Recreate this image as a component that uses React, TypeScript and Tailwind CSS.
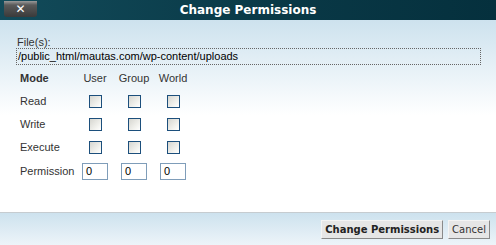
import { Fragment } from "react";

const rows = ["Read", "Write", "Execute"];
const cols = ["User", "Group", "World"];

function Box() {
  return (
    <div className="h-[13px] w-[13px] border border-[#1c4f7c] bg-[linear-gradient(135deg,#d6d6d0_0%,#f4f4f0_70%,#ffffff_100%)]" />
  );
}

function PermInput() {
  return (
    <div className="flex h-[17px] w-[27px] items-center border border-[#7f9db9] bg-white pl-[3px] text-[11px] leading-none text-black">
      0
    </div>
  );
}

export default function App() {
  return (
    <div className="flex h-[245px] w-[496px] flex-col overflow-hidden bg-white font-['Liberation_Sans',Arial,sans-serif] text-[11px]">
      {/* Title bar */}
      <div className="relative flex h-[20px] items-center justify-center bg-[linear-gradient(to_right,#124b5a,#0a3a48_50%,#05303d)]">
        <div className="absolute left-[4px] top-[1px] flex h-[16px] w-[33px] items-center justify-center rounded-b-[3px] bg-[linear-gradient(to_bottom,#9a9a9a_0%,#5a5a5a_25%,#3a3a3a_100%)]">
          <span className="font-['DejaVu_Sans',sans-serif] text-[12px] font-bold leading-none text-white">✕</span>
        </div>
        <span className="font-['DejaVu_Sans',sans-serif] text-[12px] font-bold text-white">Change Permissions</span>
      </div>

      {/* Body */}
      <div className="flex-1 bg-[linear-gradient(to_bottom,#cde2ee_0px,#ffffff_95px)] pl-[16px] pr-[15px] pt-[16px]">
        <div className="pl-[1px] leading-[13px] text-[#333]">File(s):</div>
        <div className="mt-[-1px] flex h-[17px] items-center border border-dotted border-[#666] pl-[1px] text-black">
          /public_html/mautas.com/wp-content/uploads
        </div>

        <div className="mt-[2px] grid grid-cols-[49px_26px_26px_26px] gap-x-[13px] pl-[4px] text-[#333]">
          <div className="flex h-[23px] items-center font-bold">Mode</div>
          {cols.map((c) => (
            <div key={c} className="flex h-[23px] items-center justify-center">
              {c}
            </div>
          ))}

          {rows.map((r) => (
            <Fragment key={r}>
              <div className="flex h-[23px] items-center">{r}</div>
              {cols.map((c) => (
                <div key={r + c} className="flex h-[23px] items-center justify-center">
                  <Box />
                </div>
              ))}
            </Fragment>
          ))}

          <div className="flex h-[24px] items-center">Permission</div>
          {cols.map((c) => (
            <div key={"p" + c} className="flex h-[24px] items-center justify-center">
              <PermInput />
            </div>
          ))}
        </div>
      </div>

      {/* Footer */}
      <div className="flex h-[33px] items-start justify-end gap-[5px] border-t border-[#c6ccd0] bg-[linear-gradient(to_bottom,#cde2ee,#edf4f9)] pr-[6px] pt-[7px]">
        <button className="h-[19px] border border-t-[#f4f4f4] border-l-[#f4f4f4] border-b-[#8a8a8a] border-r-[#8a8a8a] bg-[#e6e6e6] px-[3px] font-['DejaVu_Sans',sans-serif] text-[10px] font-bold leading-none text-[#222]">
          Change Permissions
        </button>
        <button className="h-[19px] border border-t-[#f4f4f4] border-l-[#f4f4f4] border-b-[#8a8a8a] border-r-[#8a8a8a] bg-[#e6e6e6] px-[3px] font-['DejaVu_Sans',sans-serif] text-[10px] leading-none text-[#333]">
          Cancel
        </button>
      </div>
    </div>
  );
}
